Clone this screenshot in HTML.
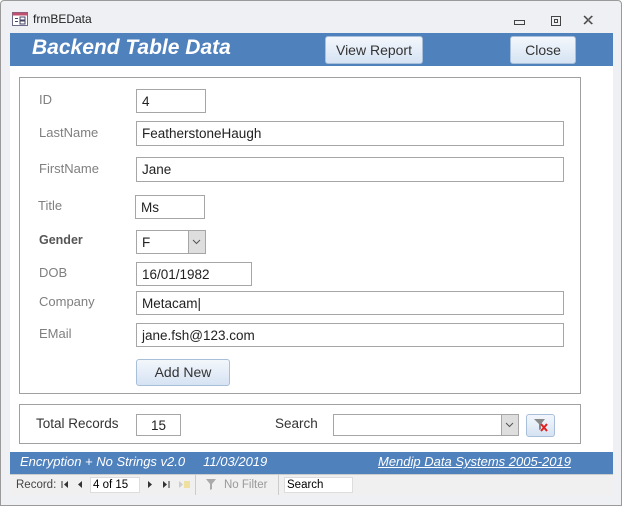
<!DOCTYPE html>
<html><head><meta charset="utf-8"><style>
*{box-sizing:border-box;margin:0;padding:0}
body{width:623px;height:507px;background:#fff;font-family:"Liberation Sans",sans-serif;position:relative;overflow:hidden}
.a{position:absolute}
.win{left:0;top:0;width:622px;height:506px;border:1px solid #9a9a9a;background:#eef0f3;border-radius:4px 4px 0 0}
.lbl{position:absolute;font-size:13px;color:#7f7f7f}
.inp{position:absolute;border:1px solid #a6a6a6;background:#fff;font-size:13.5px;color:#222;padding:4px 0 0 5px;height:25px}
.btn{position:absolute;border:1px solid #a9bfd9;border-radius:3px;background:linear-gradient(#f3f7fc,#d6e3f3);font-size:14px;color:#333;text-align:center}
.nav{font-size:11.5px;color:#444}
</style></head><body>
<div class="a win"></div>
<svg class="a" style="left:12px;top:12px" width="16" height="14"><rect x="0.5" y="0.5" width="15" height="13" fill="#fff" stroke="#6a6a8a"/><rect x="0.5" y="0.5" width="15" height="3" fill="#c0506e"/><rect x="3" y="6" width="3" height="1" fill="#446"/><rect x="3" y="9" width="3" height="1" fill="#446"/><rect x="8" y="5" width="5" height="3" fill="none" stroke="#446"/><rect x="8" y="9" width="5" height="3" fill="none" stroke="#446"/></svg>
<div class="a" style="left:33px;top:12px;font-size:12px;color:#222">frmBEData</div>
<svg class="a" style="left:513px;top:14px" width="100" height="14"><rect x="1.5" y="6.5" width="10" height="4" fill="none" stroke="#444"/><rect x="38.5" y="2.5" width="9" height="9" fill="none" stroke="#444"/><rect x="41.5" y="5.5" width="3" height="3" fill="none" stroke="#444"/><path d="M71 2 L79 10 M79 2 L71 10" stroke="#444" stroke-width="1.3"/><path d="M72 2 L80 10 M80 2 L72 10" stroke="#777" stroke-width="0.6"/></svg>
<div class="a" style="left:10px;top:33px;width:603px;height:33px;background:#4f81bd"></div>
<div class="a" style="left:32px;top:36px;font-size:21px;font-weight:bold;font-style:italic;color:#fff">Backend Table Data</div>
<div class="btn" style="left:325px;top:36px;width:98px;height:28px;line-height:26px">View Report</div>
<div class="btn" style="left:510px;top:36px;width:66px;height:28px;line-height:26px">Close</div>
<div class="a" style="left:10px;top:66px;width:603px;height:386px;background:#fff"></div>
<div class="a" style="left:19px;top:77px;width:562px;height:317px;border:1px solid #a0a0a0"></div>
<div class="lbl" style="left:39px;top:92px">ID</div>
<div class="inp" style="left:136px;top:89px;width:70px;height:24px">4</div>
<div class="lbl" style="left:39px;top:125px">LastName</div>
<div class="inp" style="left:136px;top:121px;width:428px">FeatherstoneHaugh</div>
<div class="lbl" style="left:39px;top:161px">FirstName</div>
<div class="inp" style="left:136px;top:157px;width:428px">Jane</div>
<div class="lbl" style="left:38px;top:198px">Title</div>
<div class="inp" style="left:135px;top:195px;width:70px;height:24px">Ms</div>
<div class="lbl" style="left:39px;top:233px;color:#555;font-weight:bold;font-size:12.5px">Gender</div>
<div class="inp" style="left:136px;top:230px;width:70px;height:24px">F</div>
<div class="a" style="left:188px;top:231px;width:17px;height:22px;background:#dedede;border-left:1px solid #a6a6a6"></div>
<svg class="a" style="left:192px;top:239px" width="9" height="6"><path d="M1 1 L4.5 4.5 L8 1" fill="none" stroke="#555"/></svg>
<div class="lbl" style="left:39px;top:265px">DOB</div>
<div class="inp" style="left:136px;top:262px;width:116px;height:24px">16/01/1982</div>
<div class="lbl" style="left:39px;top:294px">Company</div>
<div class="inp" style="left:136px;top:291px;width:428px;height:24px">Metacam|</div>
<div class="lbl" style="left:39px;top:326px">EMail</div>
<div class="inp" style="left:136px;top:323px;width:428px;height:24px">jane.fsh@123.com</div>
<div class="btn" style="left:136px;top:359px;width:94px;height:27px;line-height:25px">Add New</div>
<div class="a" style="left:19px;top:404px;width:562px;height:40px;border:1px solid #a0a0a0"></div>
<div class="a" style="left:36px;top:416px;font-size:13.5px;color:#333">Total Records</div>
<div class="inp" style="left:136px;top:414px;width:45px;height:22px;text-align:center;padding:3px 0 0">15</div>
<div class="a" style="left:275px;top:416px;font-size:13.5px;color:#333">Search</div>
<div class="inp" style="left:333px;top:414px;width:186px;height:22px"></div>
<div class="a" style="left:501px;top:415px;width:17px;height:20px;background:#dedede;border-left:1px solid #a6a6a6"></div>
<svg class="a" style="left:505px;top:422px" width="9" height="6"><path d="M1 1 L4.5 4.5 L8 1" fill="none" stroke="#555"/></svg>
<div class="btn" style="left:526px;top:414px;width:29px;height:23px"></div>
<svg class="a" style="left:533px;top:417px" width="16" height="16"><path d="M1 2 H12 L8 7 V12 L6 13 V7 Z" fill="#888"/><path d="M8 7 L14 14 M14 7 L8 14" stroke="#e02020" stroke-width="2"/></svg>
<div class="a" style="left:10px;top:452px;width:603px;height:22px;background:#4f81bd"></div>
<div class="a" style="left:20px;top:454px;font-size:13px;font-style:italic;color:#fff">Encryption + No Strings v2.0&nbsp;&nbsp;&nbsp;&nbsp;&nbsp;11/03/2019</div>
<div class="a" style="left:378px;top:454px;font-size:13px;font-style:italic;color:#fff;text-decoration:underline">Mendip Data Systems 2005-2019</div>
<div class="a" style="left:10px;top:474px;width:603px;height:21px;background:#f0f0f0;border-top:1px solid #ccc"></div>
<div class="a nav" style="left:16px;top:479px">Record:</div>
<svg class="a" style="left:60px;top:480px" width="30" height="10"><path d="M2 1 V8" stroke="#333"/><path d="M8 1 L4 4.5 L8 8Z M22 1 L18 4.5 L22 8Z" fill="#333"/></svg>
<div class="a" style="left:90px;top:477px;width:50px;height:16px;background:#fff;border:1px solid #ddd;font-size:11.5px;padding:1px 0 0 2px">4 of 15</div>
<svg class="a" style="left:146px;top:480px" width="45" height="10"><path d="M2 1 L6 4.5 L2 8Z M17 1 L21 4.5 L17 8Z" fill="#333"/><path d="M23 1 V8" stroke="#333"/><path d="M33 1 L37 4.5 L33 8Z" fill="#ccc"/><rect x="38" y="1" width="6" height="7" fill="#f0e0a0"/></svg>
<div class="a" style="left:195px;top:475px;width:84px;height:20px;border-left:1px solid #ccc;border-right:1px solid #ccc"></div>
<svg class="a" style="left:205px;top:478px" width="14" height="13"><path d="M1 1 H11 L7 6 V11 L5 12 V6 Z" fill="#aaa"/></svg>
<div class="a nav" style="left:224px;top:479px;color:#999">No Filter</div>
<div class="a" style="left:284px;top:477px;width:69px;height:16px;background:#fff;border:1px solid #ddd;font-size:11.5px;padding:1px 0 0 2px">Search</div>
</body></html>
